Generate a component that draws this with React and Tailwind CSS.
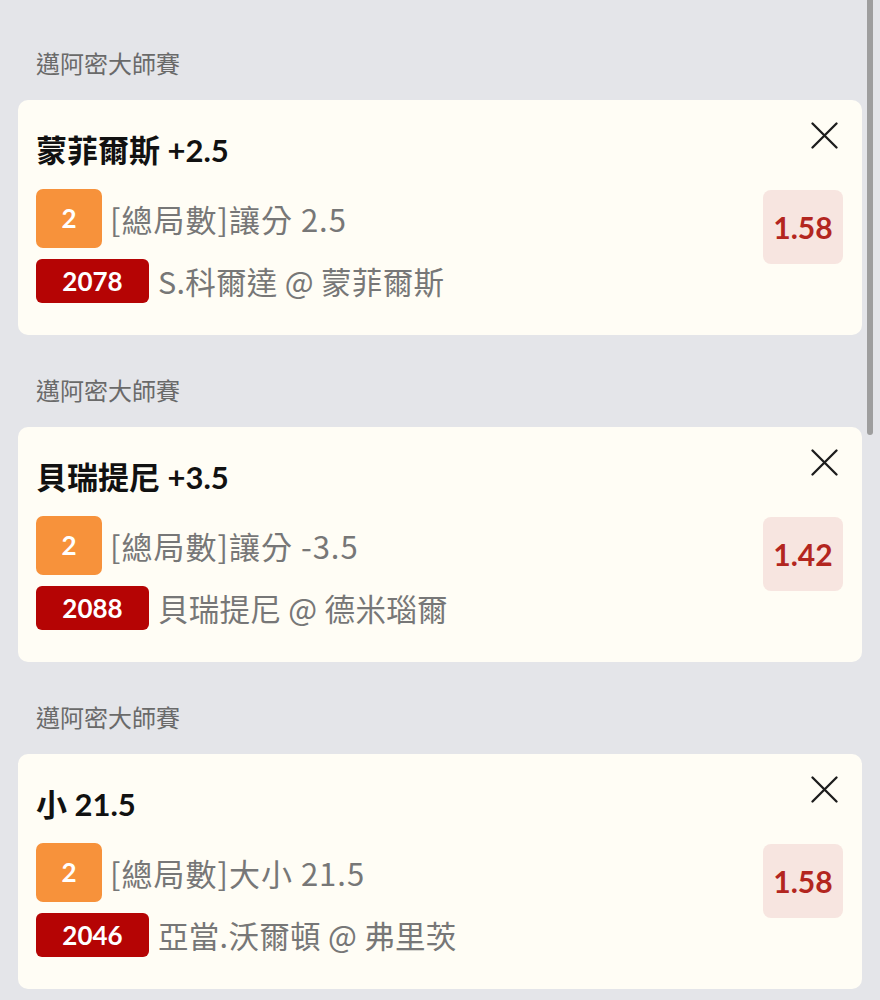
import React from 'react';

const bets = [
    {
        league: '邁阿密大師賽',
        title: '蒙菲爾斯 +2.5',
        market: '[總局數]讓分 2.5',
        code: '2078',
        match: 'S.科爾達 @ 蒙菲爾斯',
        odds: '1.58',
    },
    {
        league: '邁阿密大師賽',
        title: '貝瑞提尼 +3.5',
        market: '[總局數]讓分 -3.5',
        code: '2088',
        match: '貝瑞提尼 @ 德米瑙爾',
        odds: '1.42',
    },
    {
        league: '邁阿密大師賽',
        title: '小 21.5',
        market: '[總局數]大小 21.5',
        code: '2046',
        match: '亞當.沃爾頓 @ 弗里茨',
        odds: '1.58',
    },
];

const cjk = { fontFamily: "'Noto Sans CJK TC', sans-serif" };

const CloseIcon = () => (
    <svg width="27" height="27" viewBox="0 0 27 27" fill="none">
        <path d="M1.5 1.5 L25.5 25.5 M25.5 1.5 L1.5 25.5" stroke="#1c1c1c" strokeWidth="2.3" strokeLinecap="round" />
    </svg>
);

const BetCard = ({ bet }) => (
    <div className="pt-[42px]">
        <div className="pl-[18px] h-[28px] leading-[28px] text-[24px] text-[#6a6a6a]">{bet.league}</div>
        <div className="mt-[22px] h-[235px] rounded-[10px] bg-[#fffdf5] flex pl-[18px] pr-[19px] pt-[22px]">
            <div className="flex-1 flex flex-col">
                <div className="h-[56px] leading-[56px] text-[31px] font-bold text-[#111]">{bet.title}</div>
                <div className="mt-[11px] flex items-center gap-[8px]">
                    <div className="w-[66px] h-[59px] rounded-[7px] bg-[#f7923b] flex items-center justify-center text-white text-[26px] font-bold">
                        2
                    </div>
                    <span className="text-[31px] tracking-[1px] text-[#777] leading-none" style={cjk}>{bet.market}</span>
                </div>
                <div className="mt-[11px] flex items-center gap-[9px]">
                    <div className="w-[113px] h-[44px] rounded-[6px] bg-[#b50404] flex items-center justify-center text-white text-[26px] font-bold">
                        {bet.code}
                    </div>
                    <span className="text-[30.5px] tracking-[0.3px] text-[#777] leading-none" style={cjk}>{bet.match}</span>
                </div>
            </div>
            <div className="flex flex-col items-end">
                <button className="mr-[5px] w-[27px] h-[27px]">
                    <CloseIcon />
                </button>
                <div className="mt-[41px] w-[80px] h-[74px] rounded-[8px] bg-[#f7e5e0] flex items-center justify-center text-[30px] font-bold text-[#b3261f]">
                    {bet.odds}
                </div>
            </div>
        </div>
    </div>
);

export default function App() {
    return (
        <div
            className="relative h-[1000px] overflow-hidden bg-[#e4e5e9] px-[18px] pt-[8px]"
            style={{ fontFamily: "Lato, 'Noto Sans CJK TC', sans-serif" }}
        >
            {bets.map((bet, i) => (
                <BetCard key={i} bet={bet} />
            ))}
            <div className="absolute right-[7px] top-0 w-[6px] h-[435px] rounded-b-full bg-[#9e9e9e]" />
        </div>
    );
}
